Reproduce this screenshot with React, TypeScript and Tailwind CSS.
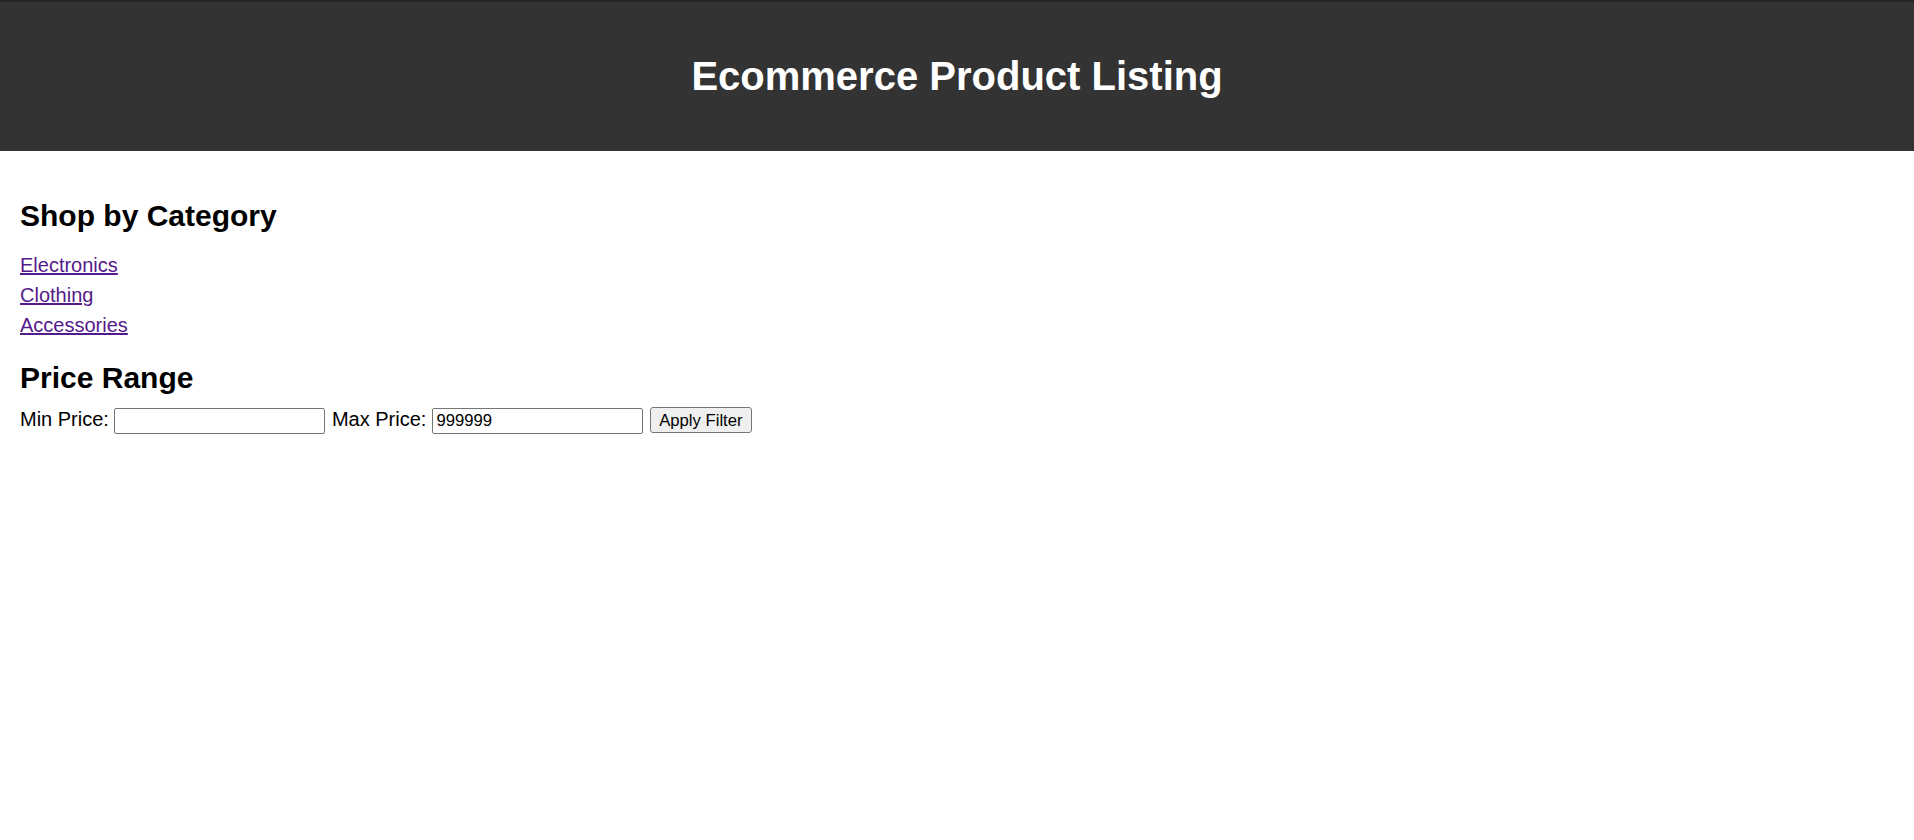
import React from "react";

export default function App() {
  return (
    <div className="min-h-[840px] bg-white text-black [font-family:'Liberation_Sans',Arial,sans-serif]">
      <header className="border-t-2 border-[#22262a] bg-[#333333] pt-[51px] pb-[52px]">
        <h1 className="text-center text-[40px] leading-[46px] font-bold text-white">
          Ecommerce Product Listing
        </h1>
      </header>
      <main className="pl-[20px]">
        <h2 className="mt-[48px] text-[30px] leading-[34.5px] font-bold">Shop by Category</h2>
        <ul className="mt-[16px] text-[20px] leading-[30px]">
          <li>
            <a href="#" className="text-[#551a8b] underline">Electronics</a>
          </li>
          <li>
            <a href="#" className="text-[#551a8b] underline">Clothing</a>
          </li>
          <li>
            <a href="#" className="text-[#551a8b] underline">Accessories</a>
          </li>
        </ul>
        <h2 className="mt-[21px] text-[30px] leading-[34.5px] font-bold">Price Range</h2>
        <div className="mt-[12px] flex items-baseline text-[20px] leading-[23px]">
          <label>Min Price:</label>
          <input
            type="text"
            className="ml-[5.5px] h-[26px] w-[211px] rounded-[2px] border border-[#767676] bg-white px-[3px] text-[16.67px] text-black outline-none"
          />
          <label className="ml-[6.5px]">Max Price:</label>
          <input
            type="text"
            defaultValue="999999"
            className="ml-[6px] h-[26px] w-[211px] rounded-[2px] border border-[#767676] bg-white px-[3px] text-[16.67px] text-black outline-none"
          />
          <button className="ml-[6.5px] h-[26px] w-[102px] rounded-[3px] border border-[#767676] bg-[#efefef] text-[16.67px] text-black">
            Apply Filter
          </button>
        </div>
      </main>
    </div>
  );
}
